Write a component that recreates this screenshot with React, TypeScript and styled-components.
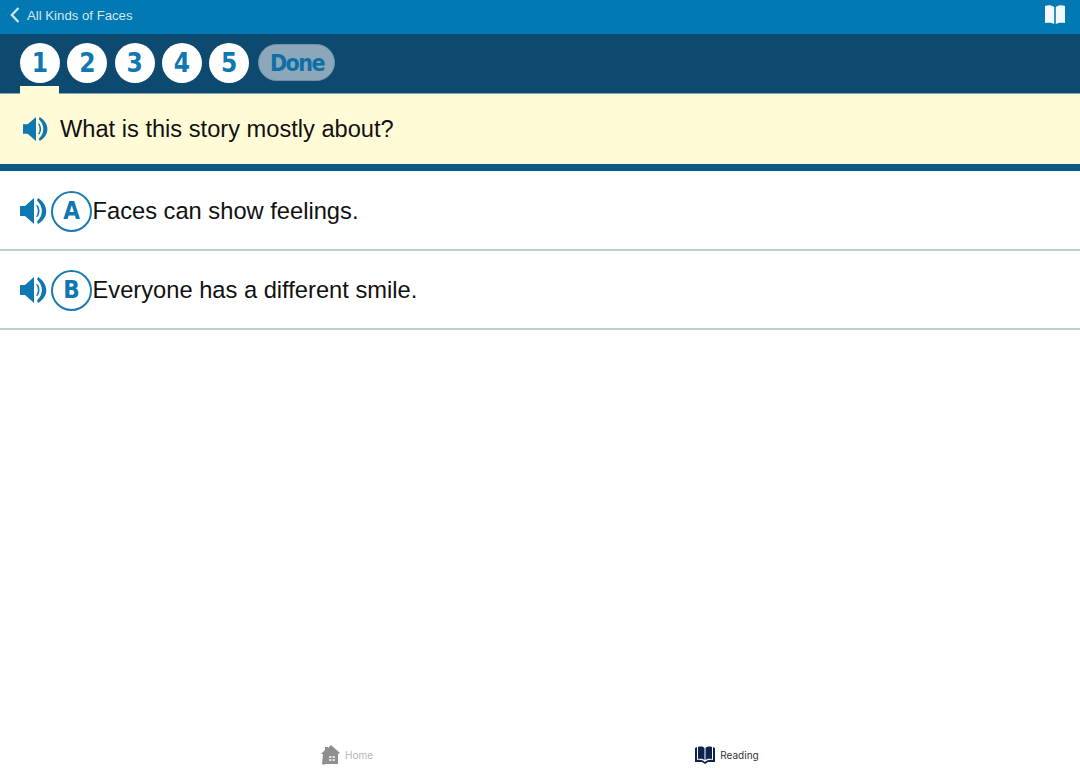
import React from "react";
import styled, { createGlobalStyle } from "styled-components";

const Global = createGlobalStyle`
  html, body { margin: 0; padding: 0; background: #fff; }
  #root { height: 774px; overflow: hidden; }
  * { box-sizing: border-box; }
`;
const Page = styled.div`
  height: 774px; display: flex; flex-direction: column; background: #fff;
  font-family: "Liberation Sans", Arial, sans-serif; color: #111;
`;
const TopBar = styled.header`
  height: 34px; flex: none; background: #0379b4; display: flex; align-items: center;
  justify-content: space-between; padding: 0 15px 5px 10px;
`;
const Back = styled.div`
  display: flex; align-items: center; gap: 7px; color: #d5e8f2; font-size: 13.2px; padding-top: 1px;
`;
const StepBar = styled.nav`
  height: 60px; flex: none; background: #0e4a6f; display: flex; align-items: flex-start;
  gap: 7.3px; padding: 9px 0 0 20px; border-bottom: 1px solid #7fa6b5;
`;
const StepWrap = styled.div`
  width: 40px; height: 50px; display: flex; justify-content: center; position: relative;
`;
const Tab = styled.div`
  position: absolute; left: 0; right: 1px; top: 43px; height: 8px; background: #fffbd6;
`;
const Step = styled.div`
  position: relative; width: 40px; height: 40px; border-radius: 50%; background: #fff; color: #0f78b0;
  display: flex; align-items: center; justify-content: center;
  font: 700 26px "DejaVu Sans", sans-serif; font-stretch: condensed;
`;
const Done = styled.div`
  width: 77px; height: 37px; margin: 1px 0 0 2px; border-radius: 19px; background: #8ba7b9; color: #0f6ea6;
  border: 1px solid #6e93aa; display: flex; align-items: center; justify-content: center;
  font: 700 23px "DejaVu Sans", sans-serif; font-stretch: condensed; letter-spacing: -1.5px;
`;
const Prompt = styled.div`
  height: 70px; flex: none; background: #fffbd6; display: flex; align-items: center;
  gap: 11px; padding: 0 0 0 23px; font-size: 23.65px;
`;
const Divider = styled.div`
  height: 7px; flex: none; background: #0e5a84; margin-bottom: 1px;
`;
const Row = styled.div`
  height: 79px; flex: none; display: flex; align-items: center; padding: 1px 0 0 20px;
  border-bottom: 2px solid #bccfd2; font-size: 23.7px;
`;
const Letter = styled.div`
  width: 41px; height: 41px; border: 2.5px solid #1a7cae; border-radius: 50%; color: #0f78b0;
  display: flex; align-items: center; justify-content: center; margin-left: 3px;
  font: 700 24px "DejaVu Sans", sans-serif; font-stretch: condensed; flex: none;
`;
const Answer = styled.span`
  padding: 1px 0 0 0.5px;
`;
const Spacer = styled.div` flex: 1; `;
const TabBar = styled.footer`
  height: 40px; flex: none; display: flex; justify-content: center; padding: 1px 6px 0 0;
`;
const TabItem = styled.div<{ $on?: boolean }>`
  width: 380px; display: flex; align-items: center; justify-content: center; gap: 5px;
  font: 400 10px "Inter", sans-serif; color: ${p => (p.$on ? "#333" : "#b5b5b5")};
`;

const Speaker = ({ size }: { size: number }) => (
  <svg width={size} height={size} viewBox="0 0 28 28" style={{ flex: "none" }}>
    <path d="M0 9h5L14 1v26l-9-8H0z" fill="#0f78b0" />
    <path d="M16 8c2.500 4 2.500 8 0 12l2-.5c2-4 2-7 0-11z" fill="#0f78b0" />
    <path d="M18 1c10 6 12 19 0 26l-1-2.500c6.500-6 6.500-15 0-21z" fill="#0f78b0" />
  </svg>
);

export default function App() {
  return (
    <Page>
      <Global />
      <TopBar>
        <Back>
          <svg width="10" height="16" viewBox="0 0 10 16">
            <path d="M8.500 1 1.800 8l6.700 7" fill="none" stroke="#d5e8f2" strokeWidth="2.200" />
          </svg>
          All Kinds of Faces
        </Back>
        <svg width="20" height="19" viewBox="0 0 20 19">
          <path d="M0 1c3-1 6.500-1 9.200 1V19c-2.500-1.500-6-1.500-9.200-1zM10.800 2c2.700-2 6.200-2 9.200-1v17c-3.200-.5-6.700-.5-9.200 1z" fill="#f2f8fb" />
        </svg>
      </TopBar>
      <StepBar>
        {[1, 2, 3, 4, 5].map(n => (
          <StepWrap key={n}>
            {n === 1 && <Tab />}
            <Step>{n}</Step>
          </StepWrap>
        ))}
        <Done>Done</Done>
      </StepBar>
      <Prompt><Speaker size={26} />What is this story mostly about?</Prompt>
      <Divider />
      <Row><Speaker size={28} /><Letter>A</Letter><Answer>Faces can show feelings.</Answer></Row>
      <Row><Speaker size={28} /><Letter>B</Letter><Answer>Everyone has a different smile.</Answer></Row>
      <Spacer />
      <TabBar>
        <TabItem>
          <svg width="19" height="20" viewBox="0 0 19 20">
            <path d="M10 0 19 8l-2 1v10H4l-1 1-2-1 1-10H0l4-4V2h3v1z" fill="#8f8f8f" />
            <path d="M8 11h6v5H8z" fill="#ddd" />
            <path d="M10.500 11h1v5h-1zM8 13h6v1H8z" fill="#8f8f8f" />
          </svg>
          Home
        </TabItem>
        <TabItem $on>
          <svg width="20" height="18" viewBox="0 0 20 18">
            <path d="M0 2l2-1v13c3-.5 6 0 8 2 2-2 5-2.500 8-2V1l2 1v14h-7l-3 2-3-2H0z" fill="#10234f" />
            <path d="M3 1c2.500-.8 5-.3 6.500 1v12c-1.500-1.200-4-1.600-6.500-1zM10.500 2c1.500-1.300 4-1.800 6.500-1v12c-2.500-.6-5-.2-6.500 1z" fill="#10234f" />
          </svg>
          Reading
        </TabItem>
      </TabBar>
    </Page>
  );
}
